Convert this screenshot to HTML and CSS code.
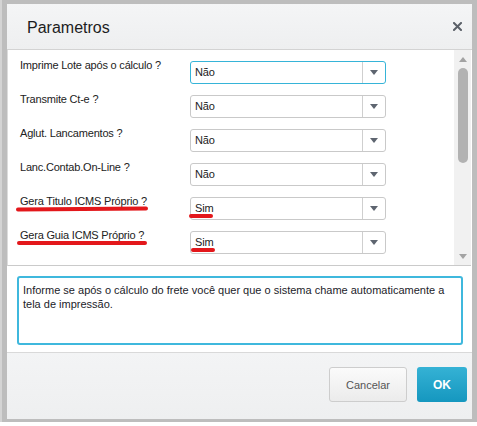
FILE: index.html
```html
<!DOCTYPE html>
<html lang="pt-BR">
<head>
    <meta charset="UTF-8">
    <meta name="viewport" content="width=device-width, initial-scale=1.0">
    <title>Parametros</title>
    <link rel="stylesheet" href="styles.css">
</head>
<body>
    <div class="frame">
        <div class="dialog">
            <div class="dialog-header">
                <h2>Parametros</h2>
                <button class="close" title="Fechar">
                    <svg width="9" height="9" viewBox="0 0 9 9"><path d="M1 1 L8 8 M8 1 L1 8" stroke="#5b6068" stroke-width="2" stroke-linecap="square"/></svg>
                </button>
            </div>

            <div class="params">
                <div class="param-list">
                    <div class="param-row">
                        <label class="param-label">Imprime Lote após o cálculo ?</label>
                        <div class="select focused"><span class="select-value">Não</span><span class="select-arrow"></span></div>
                    </div>
                    <div class="param-row">
                        <label class="param-label">Transmite Ct-e ?</label>
                        <div class="select"><span class="select-value">Não</span><span class="select-arrow"></span></div>
                    </div>
                    <div class="param-row">
                        <label class="param-label">Aglut. Lancamentos ?</label>
                        <div class="select"><span class="select-value">Não</span><span class="select-arrow"></span></div>
                    </div>
                    <div class="param-row">
                        <label class="param-label">Lanc.Contab.On-Line ?</label>
                        <div class="select"><span class="select-value">Não</span><span class="select-arrow"></span></div>
                    </div>
                    <div class="param-row">
                        <label class="param-label">Gera Titulo ICMS Próprio ?</label>
                        <div class="select"><span class="select-value">Sim</span><span class="select-arrow"></span></div>
                        <span class="mark mark-label"></span>
                        <span class="mark mark-value"></span>
                    </div>
                    <div class="param-row">
                        <label class="param-label">Gera Guia ICMS Próprio ?</label>
                        <div class="select"><span class="select-value">Sim</span><span class="select-arrow"></span></div>
                        <span class="mark mark-label mark-b"></span>
                        <span class="mark mark-value mark-b"></span>
                    </div>
                </div>
                <div class="scrollbar">
                    <span class="scroll-up"></span>
                    <div class="scroll-thumb"></div>
                    <span class="scroll-down"></span>
                </div>
            </div>

            <div class="help">
                <div class="help-box">Informe se após o cálculo do frete você quer que o sistema chame automaticamente a tela de impressão.</div>
            </div>

            <div class="dialog-footer">
                <button class="btn btn-cancel">Cancelar</button>
                <button class="btn btn-ok">OK</button>
            </div>
        </div>
    </div>
</body>
</html>
```

FILE: styles.css
```css
body {
    margin: 0;
    padding: 0;
    background-color: #ffffff;
    font-family: 'Liberation Sans', Arial, sans-serif;
    color: #222;
}

.frame {
    width: 477px;
    height: 422px;
    box-sizing: border-box;
    background-color: #bdbdbd;
    border-left: 2px solid #d4d4d4;
    padding: 4px 5px 3px 5px;
}

.dialog {
    height: 415px;
    background-color: #fff;
    display: flex;
    flex-direction: column;
}

/* header */
.dialog-header {
    height: 45px;
    flex-shrink: 0;
    display: flex;
    align-items: center;
    justify-content: space-between;
    background: linear-gradient(#f4f5f6, #eeeff0);
    border-bottom: 1px solid #d3d3d3;
    padding: 0 10px 0 20px;
}

.dialog-header h2 {
    margin: 0;
    font-size: 16px;
    font-weight: normal;
    color: #1d1d1d;
    padding-top: 2px;
}

.close {
    border: none;
    background: none;
    padding: 0;
    width: 10px;
    height: 10px;
    display: flex;
    align-items: center;
    justify-content: center;
    cursor: pointer;
}

/* parameter list */
.params {
    height: 215px;
    flex-shrink: 0;
    display: flex;
    border-bottom: 1px solid #cacaca;
    border-left: 1px solid #dcdcdc;
    margin-right: 1px;
    overflow: hidden;
}

.param-list {
    flex: 1;
    padding: 11px 0 0 12px;
    display: flex;
    flex-direction: column;
    gap: 11px;
}

.param-row {
    position: relative;
    display: flex;
    align-items: flex-start;
    height: 23px;
}

.param-label {
    width: 170px;
    font-size: 11px;
    letter-spacing: -0.2px;
    line-height: 14px;
    margin-top: -3px;
}

.select {
    width: 196px;
    height: 23px;
    box-sizing: border-box;
    border: 1px solid #c9c9c9;
    border-radius: 3px;
    display: flex;
    background-color: #fff;
}

.select.focused {
    border-color: #36b4d8;
}

.select-value {
    flex: 1;
    font-size: 11px;
    letter-spacing: -0.2px;
    line-height: 21px;
    padding-left: 4px;
}

.select-arrow {
    width: 22px;
    border-left: 1px solid #cfcfcf;
    display: flex;
    align-items: center;
    justify-content: center;
}

.select-arrow::after {
    content: "";
    border-left: 4px solid transparent;
    border-right: 4px solid transparent;
    border-top: 5px solid #5e6570;
}

/* hand drawn red highlights */
.mark {
    position: absolute;
    height: 4px;
    background-color: #e3171b;
    border-radius: 2px;
}

.mark-label {
    left: -4px;
    top: 10px;
    width: 132px;
    transform: rotate(-0.4deg);
}

.mark-value {
    left: 169px;
    top: 17px;
    width: 24px;
}

.mark-label.mark-b {
    left: -3px;
    width: 130px;
    transform: none;
}

.mark-value.mark-b {
    left: 171px;
}

/* fake scrollbar */
.scrollbar {
    width: 17px;
    background-color: #f1f1f1;
    display: flex;
    flex-direction: column;
    align-items: center;
    padding: 7px 0 6px;
    box-sizing: border-box;
}

.scroll-up {
    border-left: 4px solid transparent;
    border-right: 4px solid transparent;
    border-bottom: 5px solid #a3a3a3;
}

.scroll-thumb {
    width: 10px;
    height: 95px;
    margin-top: 6px;
    background-color: #b2b2b2;
    border-radius: 5px;
}

.scroll-down {
    margin-top: auto;
    border-left: 4px solid transparent;
    border-right: 4px solid transparent;
    border-top: 5px solid #a3a3a3;
}

/* help text */
.help {
    height: 87px;
    flex-shrink: 0;
    padding: 10px 9px 0 10px;
    box-sizing: border-box;
    border-bottom: 1px solid #d9d9d9;
}

.help-box {
    height: 69px;
    box-sizing: border-box;
    border: 2px solid #3fb8dd;
    border-radius: 3px;
    padding: 5px 4px;
    font-size: 11px;
    letter-spacing: 0;
    line-height: 14px;
    color: #1c1c2a;
}

/* footer */
.dialog-footer {
    flex: 1;
    display: flex;
    justify-content: flex-end;
    align-items: flex-start;
    gap: 10px;
    padding: 14px 5px 0 0;
    background: linear-gradient(#f3f4f5, #eeeff0);
}

.btn {
    height: 35px;
    border-radius: 3px;
    font-family: 'Liberation Sans', Arial, sans-serif;
    font-size: 11px;
    cursor: pointer;
}

.btn-cancel {
    width: 78px;
    border: 1px solid #cdcdcd;
    background: linear-gradient(#fbfbfb, #ebebeb);
    color: #555;
}

.btn-ok {
    width: 50px;
    border: none;
    background: linear-gradient(#35b2d5, #1597bf);
    color: #fff;
    font-weight: bold;
    font-size: 12px;
}
```
